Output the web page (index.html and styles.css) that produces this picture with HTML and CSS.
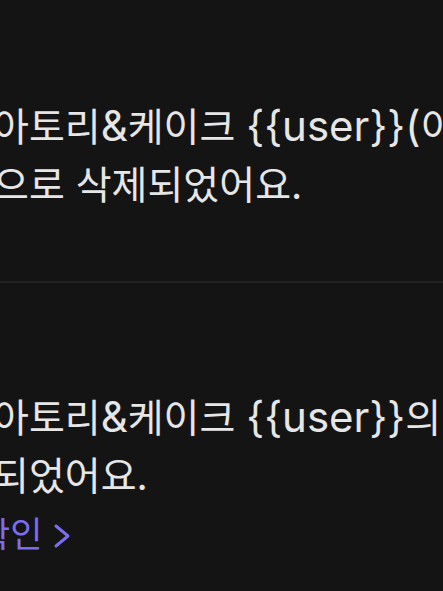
FILE: index.html
```html
<!DOCTYPE html>
<html lang="ko">
<head>
<meta charset="utf-8">
<link rel="stylesheet" href="styles.css">
</head>
<body>
<div class="list">
  <div class="item item-first">
    <div class="msg">
      <div class="line">아토리<span class="latin">&amp;</span>케이크 <span class="latin">{{user}}(</span>이)가 주문을 취소했어요</div>
      <div class="line">으로 삭제되었어요.</div>
    </div>
  </div>
  <div class="divider"></div>
  <div class="item item-second">
    <div class="msg">
      <div class="line">아토리<span class="latin">&amp;</span>케이크 <span class="latin">{{user}}</span>의 주문이</div>
      <div class="line">되었어요.</div>
      <a class="link"><span class="link-text">확인</span><svg class="chev" viewBox="0 0 18 26" width="18" height="26"><path d="M3 3 L15 13 L3 23" fill="none" stroke="currentColor" stroke-width="3" stroke-linecap="round" stroke-linejoin="round"/></svg></a>
    </div>
  </div>
</div>
</body>
</html>
```

FILE: styles.css
```css
html, body {
  margin: 0;
  padding: 0;
  background: #141414;
  width: 443px;
  height: 591px;
  overflow: hidden;
}
.list {
  display: flex;
  flex-direction: column;
}
.msg {
  margin-left: -7px;
  font-family: Inter, "Noto Sans CJK KR", sans-serif;
  font-size: 39px;
  line-height: 58px;
  color: #e6e6e6;
}
.line {
  white-space: nowrap;
}
.latin {
  font-size: 42px;
}
.item-first {
  padding-top: 97px;
  padding-bottom: 67px;
}
.divider {
  height: 2px;
  background: #222222;
}
.item-second {
  padding-top: 105px;
}
.link {
  display: flex;
  align-items: center;
  gap: 11px;
  color: #7b6df0;
  font-size: 35px;
  margin-left: -15px;
  white-space: nowrap;
}
.chev {
  display: block;
  margin-top: 4px;
}
```
